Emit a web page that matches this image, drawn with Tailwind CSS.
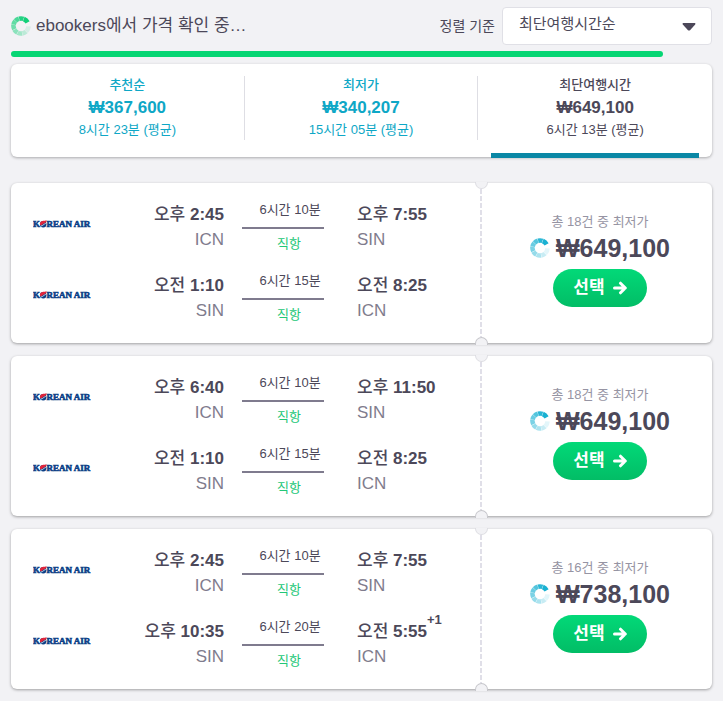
<!DOCTYPE html>
<html lang="ko">
<head>
    <meta charset="UTF-8">
    <meta name="viewport" content="width=device-width, initial-scale=1.0">
    <title>항공권 검색 결과</title>
    <script src="https://cdn.jsdelivr.net/npm/@tailwindcss/browser@4"></script>
</head>
<body class="min-h-screen bg-[#f2f2f5] px-[11px] pt-[7px] pb-[11px] font-['Liberation_Sans','Noto_Sans_CJK_KR',sans-serif] text-[13px] text-[#4c4859]">

<svg class="hidden">
    <symbol id="spinner" viewBox="0 0 20 20">
        <g fill="none" stroke="currentColor" stroke-width="4.6">
            <path d="M16.6 6.4A7.5 7.5 0 0 0 12.8 3"/>
            <path d="M12.5 2.9A7.5 7.5 0 0 0 8.2 2.7" opacity=".92"/>
            <path d="M7.9 2.8A7.5 7.5 0 0 0 4.5 4.9" opacity=".75"/>
            <path d="M4.3 5.1A7.5 7.5 0 0 0 2.6 8.6" opacity=".65"/>
            <path d="M2.5 8.9A7.5 7.5 0 0 0 3.3 13.3" opacity=".58"/>
            <path d="M3.4 13.6A7.5 7.5 0 0 0 6.4 16.6" opacity=".46"/>
            <path d="M6.7 16.7A7.5 7.5 0 0 0 11 17.4" opacity=".36"/>
            <path d="M11.3 17.4A7.5 7.5 0 0 0 15 15.6" opacity=".24"/>
            <path d="M15.2 15.4A7.5 7.5 0 0 0 17.5 10.4" opacity=".12"/>
        </g>
    </symbol>
    <symbol id="korean-air" viewBox="0 0 58 8">
        <g fill="#0b3f86" stroke="#0b3f86" stroke-width=".6" font-family="Liberation Serif, serif" font-weight="bold" font-size="9">
            <text x="0" y="7">K</text>
            <text x="13.5" y="7">REAN AIR</text>
        </g>
        <circle cx="10.2" cy="4.2" r="3.2" fill="#0b3f86"/>
        <path d="M7 5A3.3 3.3 0 0 1 9.4 1C11 .6 12 .6 13.8 .4C13 3 11.2 3.2 10 3.9S8.2 5.8 7 5Z" fill="#e0243a"/>
        <path d="M8 6C9.8 5.9 10.2 4.4 12.8 3.4" fill="none" stroke="#fff" stroke-width=".7"/>
    </symbol>
    <symbol id="arrow" viewBox="0 0 14 14">
        <path d="M1.5 7H12M7.5 2.2L12.3 7L7.5 11.8" fill="none" stroke="currentColor" stroke-width="3" stroke-linecap="round" stroke-linejoin="round"/>
    </symbol>
</svg>

<header class="flex items-center">
    <svg class="size-5 text-[#12cf78]"><use href="#spinner"/></svg>
    <p class="ml-[5px] flex-1 text-[17px]">ebookers에서 가격 확인 중…</p>
    <label for="sort" class="mr-[7px] text-[14px]">정렬 기준</label>
    <div class="relative w-[210px]">
        <select id="sort" class="h-[38px] w-full appearance-none rounded-sm border border-[#e0e0e6] bg-white pr-8 pb-1 pl-4 text-[15px]">
            <option>최단여행시간순</option>
            <option>추천순</option>
            <option>최저가순</option>
        </select>
        <svg class="pointer-events-none absolute top-4 right-4 h-2 w-[14px]" viewBox="0 0 14 8"><path d="M1.2 0H12.8Q14 .2 13.2 1.4L8 7.2Q7 8 6 7.2L.8 1.4Q0 .2 1.2 0Z" fill="currentColor"/></svg>
    </div>
</header>

<div class="mt-[6px] h-[6px]">
    <div class="h-full w-[93%] rounded-full bg-[#06d674]"></div>
</div>

<nav class="mt-[7px] grid grid-cols-3 rounded-md bg-white py-3 text-center leading-[22px] shadow-[0_1px_3px_rgba(0,0,0,0.3)]">
    <a href="#" class="block h-[69px] text-[#0ea7c6]">
        <span class="block h-16 border-r border-[#dedee4]">
            <span class="block h-[21px] font-medium leading-[18px]">추천순</span>
            <span class="block text-[17px] font-bold">₩367,600</span>
            <span class="block">8시간 23분 (평균)</span>
        </span>
    </a>
    <a href="#" class="block h-[69px] text-[#0ea7c6]">
        <span class="block h-16 border-r border-[#dedee4]">
            <span class="block h-[21px] font-medium leading-[18px]">최저가</span>
            <span class="block text-[17px] font-bold">₩340,207</span>
            <span class="block">15시간 05분 (평균)</span>
        </span>
    </a>
    <a href="#" class="relative block h-[69px]">
        <span class="block h-[21px] font-medium leading-[18px]">최단여행시간</span>
        <span class="block text-[17px] font-bold">₩649,100</span>
        <span class="block">6시간 13분 (평균)</span>
        <span class="absolute inset-x-[13px] -bottom-[13px] h-[5px] bg-[#0a87a5]"></span>
    </a>
</nav>

<main id="results" class="mt-[26px] flex flex-col gap-[13px]"></main>

<script>
    const flights = [
        {
            count: 18,
            price: '649,100',
            legs: [
                ['오후', '2:45', 'ICN', '6시간 10분', '오후', '7:55', 'SIN'],
                ['오전', '1:10', 'SIN', '6시간 15분', '오전', '8:25', 'ICN']
            ]
        },
        {
            count: 18,
            price: '649,100',
            legs: [
                ['오후', '6:40', 'ICN', '6시간 10분', '오후', '11:50', 'SIN'],
                ['오전', '1:10', 'SIN', '6시간 15분', '오전', '8:25', 'ICN']
            ]
        },
        {
            count: 16,
            price: '738,100',
            legs: [
                ['오후', '2:45', 'ICN', '6시간 10분', '오후', '7:55', 'SIN'],
                ['오후', '10:35', 'SIN', '6시간 20분', '오전', '5:55', 'ICN', '+1']
            ]
        }
    ];

    function renderLeg([fromHalf, fromTime, from, duration, toHalf, toTime, to, nextDay]) {
        return `
            <div class="grid h-[50px] grid-cols-[58px_1fr_82px_1fr] gap-x-[18px]">
                <svg class="mt-[19px] h-2 w-[58px]" role="img" aria-label="Korean Air"><use href="#korean-air"/></svg>
                <div class="pt-px text-right text-[17px] leading-[25px]">
                    <p class="whitespace-nowrap font-bold"><span class="font-medium">${fromHalf}</span> ${fromTime}</p>
                    <p class="text-[#7f7c8d]">${from}</p>
                </div>
                <div class="text-center leading-[18px]">
                    <p class="border-b-2 border-[#7f7b8e] pb-2 pl-[14px]">${duration}</p>
                    <p class="pt-[6px] pl-3 text-[#23c777]">직항</p>
                </div>
                <div class="pt-px pl-[15px] text-[17px] leading-[25px]">
                    <p class="whitespace-nowrap font-bold"><span class="relative"><span class="font-medium">${toHalf}</span> ${toTime}${nextDay ? `<sup class="absolute -top-3 left-full text-[13px] leading-5">${nextDay}</sup>` : ''}</span></p>
                    <p class="text-[#7f7c8d]">${to}</p>
                </div>
            </div>`;
    }

    function renderFlight(flight) {
        return `
            <article class="flex rounded-md bg-white shadow-[0_1px_3px_rgba(0,0,0,0.35)]">
                <div class="flex flex-1 flex-col gap-[21px] pt-[18px] pr-6 pb-[21px] pl-[22px]">
                    ${flight.legs.map(renderLeg).join('')}
                </div>
                <div class="relative flex w-[231px] flex-col items-center justify-center pb-[7px] pl-[7px]">
                    <span class="absolute inset-y-[6px] -left-px w-[2px] bg-[repeating-linear-gradient(#e0dfe8_0_5px,transparent_5px_7px)]"></span>
                    <span class="absolute -top-px -left-[6px] h-[7px] w-[13px] rounded-b-full border border-t-0 border-[#dddde2] bg-[#f2f2f5]"></span>
                    <span class="absolute -bottom-[2px] -left-[6px] h-2 w-[13px] rounded-t-full border border-b-0 border-[#c6c6cb] bg-[#f2f2f5]"></span>
                    <p class="leading-5 text-[#9694a3]">총 ${flight.count}건 중 최저가</p>
                    <p class="flex items-center gap-[6px] text-[25px] leading-8 font-bold">
                        <svg class="size-5 text-[#19b1d2]"><use href="#spinner"/></svg>
                        ₩${flight.price}
                    </p>
                    <button type="button" class="mt-[5px] flex h-[38px] w-[94px] items-center justify-center gap-2 rounded-full bg-linear-to-b from-[#02d978] to-[#02bd66] text-[17px] font-bold text-white">
                        선택
                        <svg class="size-[14px]"><use href="#arrow"/></svg>
                    </button>
                </div>
            </article>`;
    }

    document.getElementById('results').innerHTML = flights.map(renderFlight).join('');
</script>
</body>
</html>
